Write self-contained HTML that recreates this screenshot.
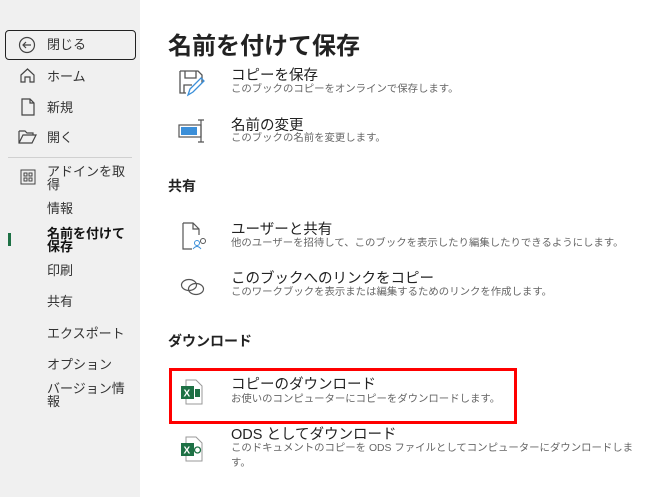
<!DOCTYPE html>
<html><head><meta charset="utf-8"><style>
*{margin:0;padding:0;box-sizing:border-box}
body{width:666px;height:497px;overflow:hidden;background:#fff;font-family:"Liberation Sans","Noto Sans CJK JP",sans-serif;position:relative;color:#222}
#side{position:absolute;left:0;top:0;width:140px;height:497px;background:#f0f0f0}
.a{position:absolute;white-space:nowrap}
.s{font-size:13px;color:#333;left:47px;line-height:13px}
.t{font-size:14.5px;color:#222;left:231px;line-height:16px}
.d{font-size:10.4px;color:#666;left:231px;line-height:12px}
.h{font-size:14px;font-weight:bold;left:168px}
svg{position:absolute}
</style></head><body>
<div id="side">
<div class="a" style="left:5px;top:30px;width:131px;height:30px;border:1.5px solid #222;border-radius:4px"></div>
<svg style="left:18px;top:36px" width="18" height="18" viewBox="0 0 18 18"><circle cx="9" cy="9" r="7.5" fill="none" stroke="#444" stroke-width="1.2"/><path d="M13 9H5M8 6L5 9l3 3" fill="none" stroke="#444" stroke-width="1.2"/></svg>
<div class="a s" style="top:38px">閉じる</div>
<svg style="left:19px;top:67px" width="17" height="17" viewBox="0 0 17 17"><path d="M2 8L8.5 2 15 8V15H11V10H6V15H2Z" fill="none" stroke="#444" stroke-width="1.2"/></svg>
<div class="a s" style="top:70px">ホーム</div>
<svg style="left:21px;top:98px" width="14" height="18" viewBox="0 0 14 18"><path d="M1 1H9L13 5V17H1Z M9 1V5H13" fill="none" stroke="#444" stroke-width="1.2"/></svg>
<div class="a s" style="top:101px">新規</div>
<svg style="left:18px;top:129px" width="19" height="16" viewBox="0 0 19 16"><path d="M1 2H7L9 4H15V6 M1 2V14H14L18 6H5L1 14" fill="none" stroke="#444" stroke-width="1.2"/></svg>
<div class="a s" style="top:131px">開く</div>
<div class="a" style="left:8px;top:157px;width:124px;height:1px;background:#d0d0d0"></div>
<svg style="left:20px;top:169px" width="16" height="16" viewBox="0 0 16 16"><rect x="1" y="1" width="14" height="14" fill="none" stroke="#444"/><rect x="4" y="4" width="3" height="3" fill="none" stroke="#444"/><rect x="9" y="4" width="3" height="3" fill="none" stroke="#444"/><rect x="4" y="9" width="3" height="3" fill="none" stroke="#444"/><rect x="9" y="9" width="3" height="3" fill="none" stroke="#444"/></svg>
<div class="a s" style="top:165px">アドインを取<br>得</div>
<div class="a s" style="top:202px">情報</div>
<div class="a" style="left:8px;top:233px;width:3px;height:13px;background:#1e7145"></div>
<div class="a s" style="top:227px;font-weight:bold;color:#111">名前を付けて<br>保存</div>
<div class="a s" style="top:264px">印刷</div>
<div class="a s" style="top:295px">共有</div>
<div class="a s" style="top:327px">エクスポート</div>
<div class="a s" style="top:358px">オプション</div>
<div class="a s" style="top:382px">バージョン情<br>報</div>
</div>

<div class="a" style="left:168px;top:26px;font-size:24px;font-weight:bold;color:#222">名前を付けて保存</div>

<svg style="left:178px;top:69px" width="28" height="28" viewBox="0 0 28 28"><path d="M2 2H20L24 6V14 M2 2V24H8 M7 2V9H18V2 M6 24V16H14" fill="none" stroke="#555" stroke-width="1.3"/><path d="M10 26L12 20 23 9 26 12 15 23Z" fill="none" stroke="#3b8fd9" stroke-width="1.3"/></svg>
<div class="a t" style="top:68px">コピーを保存</div>
<div class="a d" style="top:84px">このブックのコピーをオンラインで保存します。</div>

<svg style="left:178px;top:118px" width="30" height="26" viewBox="0 0 30 26"><rect x="1" y="7" width="22" height="12" fill="none" stroke="#555" stroke-width="1.2"/><rect x="3" y="9" width="16" height="8" fill="#3b8fd9"/><path d="M20 2H26M23 2V24M20 24H26" stroke="#555" stroke-width="1.2" fill="none"/></svg>
<div class="a t" style="top:118px">名前の変更</div>
<div class="a d" style="top:133px">このブックの名前を変更します。</div>

<div class="a h" style="top:176px">共有</div>

<svg style="left:182px;top:222px" width="24" height="28" viewBox="0 0 24 28"><path d="M1 1H11L17 7V13 M1 1V27H10 M11 1V7H17" fill="none" stroke="#555" stroke-width="1.2"/><circle cx="15" cy="21" r="2.5" fill="none" stroke="#3b8fd9"/><path d="M11 27Q15 22 19 27" fill="none" stroke="#3b8fd9"/><circle cx="21" cy="19" r="2.5" fill="none" stroke="#555"/></svg>
<div class="a t" style="top:222px">ユーザーと共有</div>
<div class="a d" style="top:238px">他のユーザーを招待して、このブックを表示したり編集したりできるようにします。</div>

<svg style="left:179px;top:277px" width="28" height="20" viewBox="0 0 28 20"><ellipse cx="10" cy="8" rx="7.5" ry="5.5" fill="none" stroke="#555" stroke-width="1.2"/><ellipse cx="17" cy="12" rx="7.5" ry="5.5" fill="none" stroke="#555" stroke-width="1.2"/></svg>
<div class="a t" style="top:271px">このブックへのリンクをコピー</div>
<div class="a d" style="top:287px">このワークブックを表示または編集するためのリンクを作成します。</div>

<div class="a h" style="top:331px">ダウンロード</div>

<div class="a" style="left:169px;top:368px;width:348px;height:56px;border:3px solid #f00"></div>
<svg style="left:180px;top:379px" width="24" height="26" viewBox="0 0 24 26"><path d="M6 1H16L22 7V25H6Z" fill="#fff" stroke="#999"/><rect x="15" y="10" width="5" height="8" fill="#1e7145"/><rect x="1" y="7" width="13" height="13" fill="#1e7145"/><text x="3.5" y="17.5" font-size="10" font-weight="bold" fill="#fff" font-family="Liberation Sans">X</text></svg>
<div class="a t" style="top:377px">コピーのダウンロード</div>
<div class="a d" style="top:394px">お使いのコンピューターにコピーをダウンロードします。</div>

<svg style="left:180px;top:436px" width="24" height="26" viewBox="0 0 24 26"><path d="M6 1H16L22 7V25H6Z" fill="#fff" stroke="#999"/><circle cx="17.5" cy="14" r="3" fill="none" stroke="#1e7145" stroke-width="1.3"/><rect x="1" y="7" width="13" height="13" fill="#1e7145"/><text x="3.5" y="17.5" font-size="10" font-weight="bold" fill="#fff" font-family="Liberation Sans">X</text></svg>
<div class="a t" style="top:427px">ODS としてダウンロード</div>
<div class="a d" style="top:443px">このドキュメントのコピーを ODS ファイルとしてコンピューターにダウンロードしま</div>
<div class="a d" style="top:458px">す。</div>
</body></html>
